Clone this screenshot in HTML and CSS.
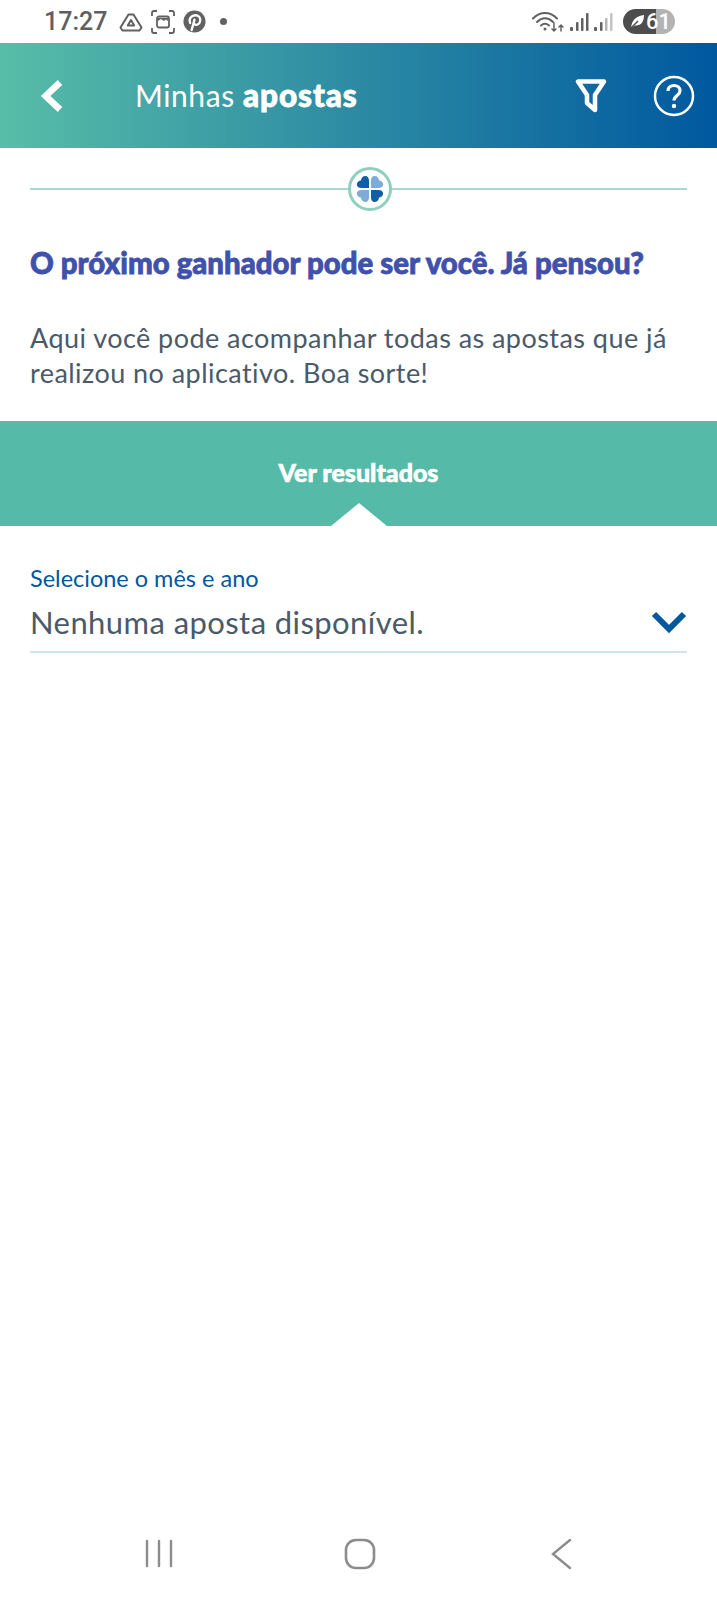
FILE: index.html
```html
<!DOCTYPE html>
<html lang="pt-BR">
<head>
  <meta charset="UTF-8" />
  <meta name="viewport" content="width=device-width, initial-scale=1.0" />
  <title>Minhas apostas</title>
  <link rel="stylesheet" href="styles.css">
</head>
<body>
  <div class="status-bar">
    <div class="status-left">
      <span class="clock">17:27</span>
      <svg class="st-icon" width="24" height="24" viewBox="0 0 24 24" fill="none" stroke="#616161" stroke-width="2" stroke-linejoin="round">
        <path d="M9.5 4.5h5l8 13-2 3H3.500l-2-3z"/>
        <path d="M12 10l3.200 5.500H8.800z"/>
      </svg>
      <svg class="st-icon" width="24" height="24" viewBox="0 0 24 24" fill="none" stroke="#616161" stroke-width="1.800">
        <path d="M1 6V3q0-2 2-2h3M18 1h3q2 0 2 2v3M23 18v3q0 2-2 2h-3M6 23H3q-2 0-2-2v-3"/>
        <rect x="6" y="6.500" width="12" height="11" rx="2"/>
        <path d="M7 11l3-2 3 2 2-1.500 2 1.500v-3H7z" fill="#616161" stroke="none"/>
      </svg>
      <svg class="st-icon" width="23" height="23" viewBox="0 0 24 24">
        <circle cx="12" cy="12" r="11.500" fill="#616161"/>
        <path d="M9 21l3-11M7.500 13.500C5.500 9 9 5.500 12.800 5.500c3.500 0 5.500 2.500 5.200 5.300-.3 3-2.300 5-4.600 4.700-1.300-.2-2-1-2.400-2" fill="none" stroke="#fff" stroke-width="2.400" stroke-linecap="round"/>
      </svg>
      <span class="st-dot"></span>
    </div>
    <div class="status-right">
      <svg width="35" height="24" viewBox="0 0 35 24" fill="none" stroke="#616161" stroke-linecap="round">
        <path d="M1 8.500C8 1 18 1 25 8.500" stroke-width="2"/>
        <path d="M5 12c5-5 11-5 16 0" stroke-width="2"/>
        <path d="M9 15.500c3-2.500 5-2.500 8 0" stroke-width="2"/>
        <circle cx="13" cy="19" r="1.500" fill="#616161" stroke="none"/>
        <path d="M22 13v8M20 19l2 2 2-2M29 21v-6M27 17l2-2 2 2" stroke-width="1.500"/>
      </svg>
      <svg width="22" height="24" viewBox="0 0 22 24" fill="#616161">
        <rect x="1" y="17" width="3" height="4" rx="1"/>
        <rect x="7" y="12" width="2.500" height="9" rx="1"/>
        <rect x="12" y="8" width="2.500" height="13" rx="1"/>
        <rect x="17" y="3" width="2.500" height="18" rx="1"/>
      </svg>
      <svg width="22" height="24" viewBox="0 0 22 24" fill="#616161">
        <rect x="1" y="17" width="3" height="4" rx="1"/>
        <rect x="7" y="12" width="2.500" height="9" rx="1"/>
        <rect x="12" y="8" width="2.500" height="13" rx="1" fill="#b5b5b5"/>
        <rect x="17" y="3" width="2.500" height="18" rx="1" fill="#c4c4c4"/>
      </svg>
      <div class="battery">
        <svg width="17" height="17" viewBox="0 0 17 17">
          <path d="M2 15C3 6 8 3 15 2c0 7-3 11-9 10.500z" fill="#fff"/>
          <path d="M2 15l7-7" stroke="#4d4d4d" stroke-width="1.500"/>
        </svg>
        <span>61</span>
      </div>
    </div>
  </div>

  <header class="app-header">
    <svg class="back" width="28" height="36" viewBox="0 0 28 36" fill="none" stroke="#fff" stroke-width="6.500" stroke-linejoin="miter">
      <path d="M22 4.500L7.500 18 22 31.500"/>
    </svg>
    <h1>Minhas <b>apostas</b></h1>
    <svg class="filter" width="32" height="36" viewBox="0 0 32 36" fill="none" stroke="#fff" stroke-width="4.500" stroke-linejoin="round">
      <path d="M3 3.500h26L20 17v15l-8-7v-8z"/>
    </svg>
    <svg class="help" width="42" height="42" viewBox="0 0 42 42" fill="none" stroke="#fff" stroke-width="2.500">
      <circle cx="21" cy="21" r="19"/>
      <path d="M15 16c0-4 3-5.500 6-5.500s6 1.800 6 5.200c0 4.800-6 4.800-6 9.800" stroke-width="3.200"/>
      <circle cx="21" cy="31" r="2.200" fill="#fff" stroke="none"/>
    </svg>
  </header>

  <div class="clover-rule">
    <span class="clover">
      <svg width="28" height="28" viewBox="0 0 28 28">
        <path d="M13 13H5.500C1 13 0 9.500 1.500 7.500 2.500 6 4 5.500 5 5.500 5 3 7 1 9.500 1 12 1 13 3.500 13 5.500z" fill="#0f5fa8"/>
        <path d="M15 13h7.500c4.500 0 5.500-3.500 4-5.500C25.500 6 24 5.500 23 5.500 23 3 21 1 18.500 1 16 1 15 3.500 15 5.500z" fill="#7fabd6"/>
        <path d="M13 15H5.500C1 15 0 18.500 1.500 20.500 2.500 22 4 22.500 5 22.500 5 25 7 27 9.500 27 12 27 13 24.500 13 22.500z" fill="#7fabd6"/>
        <path d="M15 15h7.500c4.500 0 5.500 3.500 4 5.500-1 1.500-2.500 2-3.500 2 0 2.500-2 4.500-4.500 4.500-2.500 0-3.500-2.500-3.500-4.500z" fill="#0f5fa8"/>
      </svg>
    </span>
  </div>

  <section class="intro">
    <h2>O próximo ganhador pode ser você. Já pensou?</h2>
    <p>Aqui você pode acompanhar todas as apostas que já realizou no aplicativo. Boa sorte!</p>
  </section>

  <div class="results-tab">Ver resultados</div>

  <section class="month-select">
    <label>Selecione o mês e ano</label>
    <div class="select-row">
      <span>Nenhuma aposta disponível.</span>
      <svg width="36" height="24" viewBox="0 0 36 24" fill="none" stroke="#00589f" stroke-width="6">
        <path d="M3 4l15 15L33 4"/>
      </svg>
    </div>
  </section>

  <nav class="android-nav">
    <svg width="30" height="30" viewBox="0 0 30 30" stroke="#8c8c8c" stroke-width="2.400" stroke-linecap="round">
      <path d="M3 3v25M15 3v25M27 3v25"/>
    </svg>
    <svg class="nav-home" width="32" height="32" viewBox="0 0 32 32" fill="none" stroke="#8c8c8c" stroke-width="2.600">
      <rect x="2" y="2" width="28" height="28" rx="10"/>
    </svg>
    <svg width="22" height="32" viewBox="0 0 22 32" fill="none" stroke="#8c8c8c" stroke-width="2.400" stroke-linecap="round">
      <path d="M19 2L2 16l17 14"/>
    </svg>
  </nav>
</body>
</html>
```

FILE: styles.css
```css
* {
  box-sizing: border-box;
}

body {
  margin: 0;
  min-height: 1600px;
  display: flex;
  flex-direction: column;
  background: #fff;
  font-family: 'Lato', sans-serif;
  overflow: hidden;
}

.status-bar {
  height: 43px;
  padding: 0 42px 0 44px;
  display: flex;
  align-items: center;
  justify-content: space-between;
}

.status-left, .status-right {
  display: flex;
  align-items: center;
}

.status-left {
  gap: 8px;
}

.clock {
  font-family: 'Roboto', sans-serif;
  font-size: 25px;
  font-weight: 500;
  color: #5f5f5f;
  margin-right: 4px;
}

.st-dot {
  width: 7px;
  height: 7px;
  margin-left: 6px;
  border-radius: 50%;
  background: #616161;
}

.status-right {
  gap: 2px;
}

.battery {
  width: 52px;
  height: 25px;
  margin-left: 6px;
  border-radius: 13px;
  display: flex;
  align-items: center;
  padding-left: 6px;
  background: linear-gradient(90deg, #4d4d4d 0, #4d4d4d 63%, #b3b3b3 63%, #b3b3b3 100%);
  color: #fff;
  font-family: 'Roboto', sans-serif;
  font-size: 22px;
  font-weight: 500;
}

.app-header {
  height: 105px;
  padding: 0 22px 0 38px;
  display: flex;
  align-items: center;
  background: linear-gradient(90deg, #58bda8, #00589f);
  color: #fff;
}

.app-header h1 {
  margin: 0 0 2px 69px;
  font-size: 30px;
  font-weight: 400;
  letter-spacing: 0.6px;
}

.app-header b {
  font-size: 31.5px;
  font-weight: 900;
  letter-spacing: 0.9px;
  -webkit-text-stroke: 0.8px #fff;
}

.filter {
  margin-left: auto;
  margin-right: 2px;
}

.help {
  margin-left: 44px;
}

.clover-rule {
  margin: 18px 30px 0;
  padding-left: 22px;
  height: 46px;
  display: flex;
  align-items: center;
  justify-content: center;
  background: linear-gradient(#a9d9ce, #a9d9ce) center / 100% 2px no-repeat;
}

.clover {
  width: 44px;
  height: 44px;
  border: 3px solid #90cfc0;
  border-radius: 50%;
  background: #fff;
  display: flex;
  align-items: center;
  justify-content: center;
}

.intro {
  padding: 0 30px;
}

.intro h2 {
  margin: 34px 0 0;
  font-size: 29.4px;
  line-height: 34px;
  font-weight: 900;
  color: #3f51ab;
  -webkit-text-stroke: 0.8px #3f51ab;
  white-space: nowrap;
}

.intro p {
  margin: 40px 0 0;
  font-size: 27px;
  line-height: 35px;
  color: #4a5a6a;
  letter-spacing: 0.45px;
}

.results-tab {
  position: relative;
  height: 105px;
  margin-top: 31px;
  padding-bottom: 4px;
  display: flex;
  align-items: center;
  justify-content: center;
  background: #56baa8;
  color: #fff;
  font-size: 25px;
  font-weight: 900;
  -webkit-text-stroke: 0.6px #fff;
}

/* notch at the bottom edge of the tab */
.results-tab::after {
  content: "";
  position: absolute;
  left: 50%;
  bottom: 0;
  margin-left: -28px;
  border-left: 28px solid transparent;
  border-right: 28px solid transparent;
  border-bottom: 23px solid #fff;
}

.month-select {
  margin: 38px 30px 0;
  padding-bottom: 9px;
  border-bottom: 2px solid #cfe6e2;
}

.month-select label {
  display: block;
  font-size: 23.5px;
  line-height: 28px;
  color: #00589f;
}

.select-row {
  display: flex;
  align-items: center;
  justify-content: space-between;
  margin-top: 10px;
  font-size: 31px;
  line-height: 40px;
  color: #4a5a6a;
  letter-spacing: 0.42px;
}

.android-nav {
  margin-top: auto;
  height: 62px;
  padding: 0 144px;
  display: flex;
  align-items: flex-start;
  justify-content: space-between;
}

.nav-home {
  margin-right: 6px;
}
```
